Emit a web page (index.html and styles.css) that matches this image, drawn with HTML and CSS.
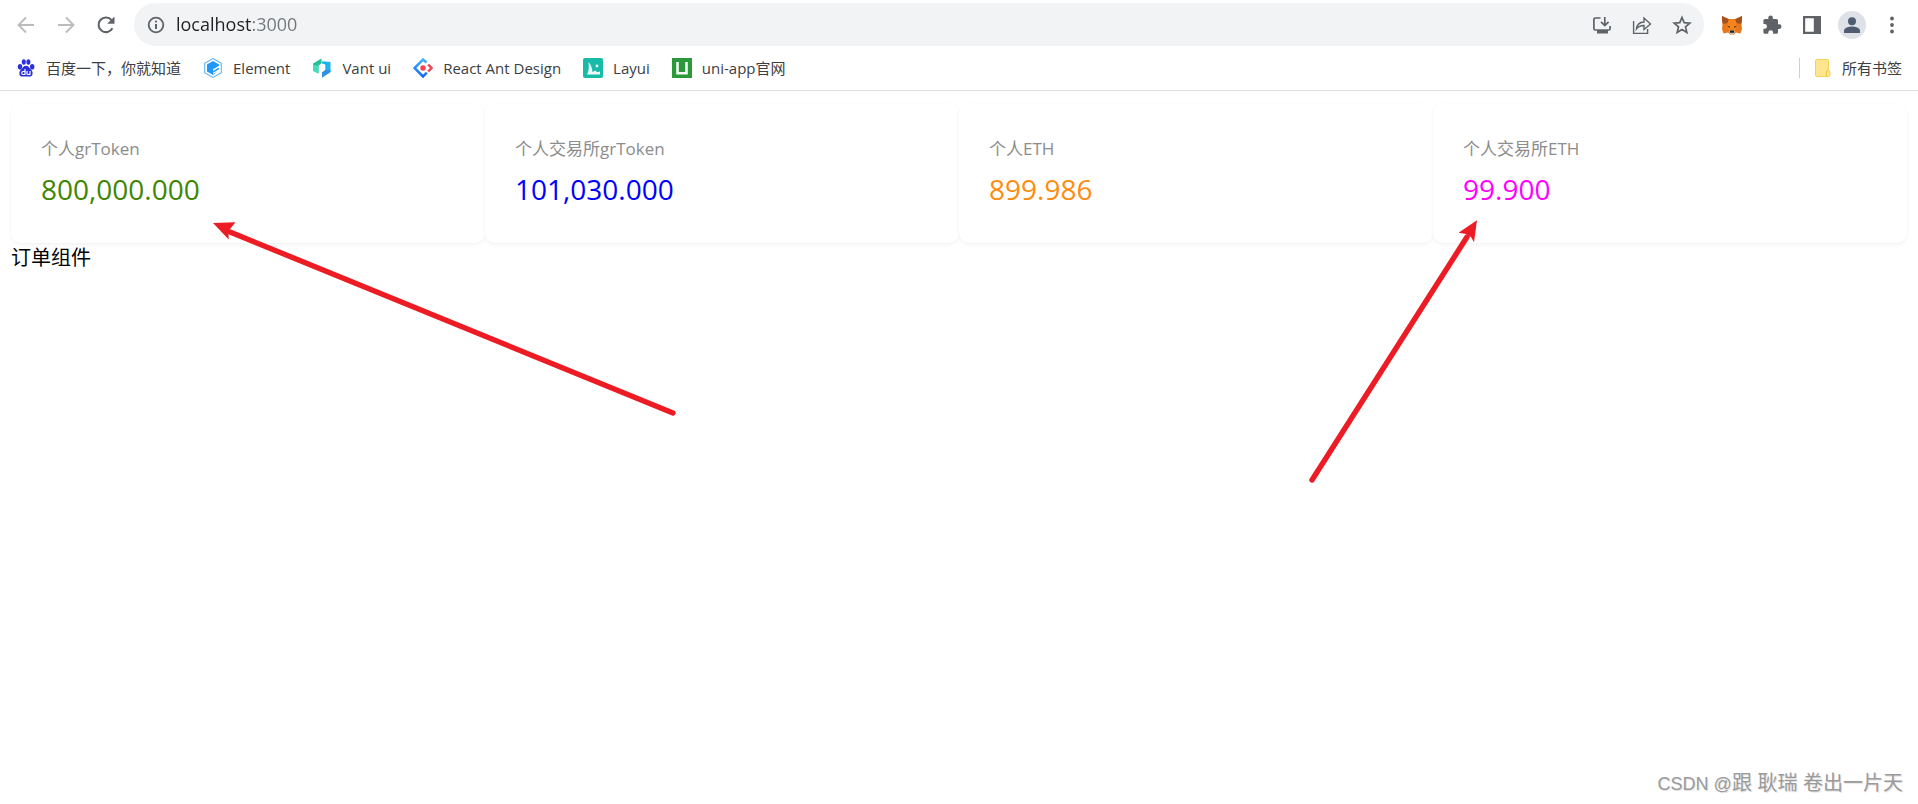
FILE: index.html
```html
<!DOCTYPE html>
<html lang="zh-CN">
<head>
<meta charset="utf-8">
<title>localhost:3000</title>
<link rel="stylesheet" href="styles.css">
</head>
<body>
<header class="browser">
  <nav class="toolbar" aria-label="浏览器">
    <div class="buttons">
      <button class="tool tool-disabled" aria-label="后退"><svg width="18" height="18" viewBox="0 0 18 18"><path d="M17 9H1.5M9 1.5 1.5 9 9 16.5" fill="none" stroke="currentColor" stroke-width="1.9"/></svg></button>
      <button class="tool tool-disabled" aria-label="前进"><svg width="18" height="18" viewBox="0 0 18 18"><path d="M1 9h15.500M9 1.500 16.500 9 9 16.500" fill="none" stroke="currentColor" stroke-width="1.9"/></svg></button>
      <button class="tool" aria-label="重新加载"><svg width="20" height="20" viewBox="0 0 20 20"><path d="M16.400 13.200A7.300 7.300 0 1 1 15.600 5.200" fill="none" stroke="currentColor" stroke-width="2.100"/><path d="M18.500 1.500v7.300h-7.300z" fill="currentColor"/></svg></button>
    </div>
    <div class="address">
      <button class="info" aria-label="网站信息"><svg width="18" height="18" viewBox="0 0 18 18"><circle cx="9" cy="9" r="7.300" fill="none" stroke="currentColor" stroke-width="1.800"/><path d="M9 8v5" stroke="currentColor" stroke-width="2"/><circle cx="9" cy="5.600" r="1.100" fill="currentColor"/></svg></button>
      <input class="url" type="text" value="localhost:3000" aria-label="地址">
      <button class="tool" aria-label="安装"><svg width="20" height="20" viewBox="0 0 20 20"><path d="M8.500 3H3.200Q1.900 3 1.900 4.300v9.400Q1.900 15 3.200 15h13.600q1.300 0 1.300-1.300V11M12.800 2v8.200M9 6.800l3.800 3.800 3.800-3.800" fill="none" stroke="currentColor" stroke-width="1.700"/><path d="M5 15h11v3.500H5z" fill="currentColor"/></svg></button>
      <button class="tool" aria-label="分享"><svg width="20" height="20" viewBox="0 0 20 20"><path d="M1.600 6v12.400h14V14M4.500 13.800C5 9.500 7.500 7.200 12 7V3l6.500 6-6.500 5.500v-4C8.500 10.400 6.300 11.500 4.500 13.800Z" fill="none" stroke="currentColor" stroke-width="1.400"/></svg></button>
      <button class="tool" aria-label="收藏"><svg width="20" height="20" viewBox="0 0 20 20"><path d="m10 2.500 2.200 5.200 5.600.5-4.300 3.700 1.300 5.500-4.800-2.900-4.800 2.900 1.300-5.500-4.300-3.700 5.600-.5z" fill="none" stroke="currentColor" stroke-width="1.700"/></svg></button>
    </div>
    <div class="buttons">
      <button class="tool" aria-label="MetaMask"><svg width="22" height="20" viewBox="0 0 22 20"><path d="M1 1l7 3h6l7-3-.5 8 .5 5-1.500 4.500-4.500-1-2 2H9l-2-2-4.500 1L1 14l.5-5z" fill="#e8761b"/><path d="M1 1l7 3.500L6.500 8 2 9 1 6zM21 1l-7 3.500L15.500 8l4.500 1 1-3z" fill="#a4501f"/><path d="M8 4.500h6l2 6-2 5H8l-2-5z" fill="#f6851b"/><path d="M6 10.500l3 1-.5 1.500zM16 10.500l-3 1 .5 1.500z" fill="#4a2d1a"/><path d="M7.500 17l1.500-1.500h4l1.500 1.500-1.500 2H9z" fill="#d0c0b2"/><path d="M9.200 15.500h3.600l.5 2.200H8.700z" fill="#20201f"/></svg></button>
      <button class="tool" aria-label="扩展程序"><svg width="20" height="20" viewBox="0 0 20 20"><path d="M17.200 9.300H16V5.600Q16 4 14.400 4h-3.500V2.800a2.300 2.300 0 0 0-4.600 0V4H3Q1.400 4 1.400 5.600V9h1.200a2.400 2.400 0 0 1 0 4.800H1.400v3.400q0 1.600 1.600 1.600h3.300v-1.200a2.400 2.400 0 0 1 4.800 0v1.200h3.300q1.600 0 1.600-1.600v-3.300h1.200a2.300 2.300 0 0 0 0-4.600z" fill="currentColor"/></svg></button>
      <button class="tool" aria-label="侧边栏"><svg width="20" height="20" viewBox="0 0 20 20"><path d="M1 1h18v18H1zM3.200 3.200v13.600h8.600V3.200z" fill="currentColor" fill-rule="evenodd"/></svg></button>
      <button class="tool" aria-label="用户"><svg width="28" height="28" viewBox="0 0 28 28"><circle cx="14" cy="14" r="14" fill="#dee1e8"/><circle cx="14" cy="10.200" r="4" fill="#4f5b70"/><path d="M6 22v-2.200c0-3 5-4.300 8-4.300s8 1.300 8 4.300V22z" fill="#4f5b70"/></svg></button>
      <button class="tool" aria-label="菜单"><svg width="4" height="18" viewBox="0 0 4 18"><g fill="currentColor"><circle cx="2" cy="2.500" r="1.900"/><circle cx="2" cy="9" r="1.900"/><circle cx="2" cy="15.500" r="1.900"/></g></svg></button>
    </div>
  </nav>
  <nav class="bookmarks" aria-label="书签">
    <a class="bookmark" href="#"><svg width="20" height="20" viewBox="0 0 20 20"><g fill="#2a2fe0"><ellipse cx="4" cy="8.800" rx="2.200" ry="2.800"/><ellipse cx="7.800" cy="4" rx="2" ry="2.800"/><ellipse cx="12.400" cy="4" rx="2" ry="2.800"/><ellipse cx="16.200" cy="8.800" rx="2.200" ry="2.800"/><path d="M10 7.800c2.300 0 3.500 2.200 4.700 3.500 3.400 3.400 1.800 7.300-1 7.300H6.300c-2.800 0-4.400-3.900-1-7.300C6.500 10 7.700 7.800 10 7.800z"/></g><path d="M9 11v5.500H7.200q-1.500 0-1.500-1.500t1.500-1.500H9M11 13v2.500q0 1 1 1h2V13" fill="none" stroke="#fff" stroke-width="1.200"/></svg><span>百度一下，你就知道</span></a>
    <a class="bookmark" href="#"><svg width="20" height="20" viewBox="0 0 20 20"><path d="M10 .6 18.300 5.300v9.400L10 19.400 1.700 14.700V5.300z" fill="none" stroke="#5eb3f8" stroke-width="1.100"/><path d="M10 3l6 3.500v1.300l-6 3.500v1.600l6-3.500v1.800l-6 3.500v1.200l4.500-2.500L10 17l-6-3.500v-7z" fill="#1e98fa"/></svg><span>Element</span></a>
    <a class="bookmark" href="#"><svg width="20" height="20" viewBox="0 0 20 20"><path d="M9.500.5v5L6.500 7.500v7.900L1 12.800V5.500z" fill="#22bf98"/><path d="M1 6.500 6.500 8v7.400L1 12.800z" fill="#45dcbd"/><path d="M10 3.200 18.500 4v10L10 19.500v-5l3.300-2.300V6.500L10 5.500z" fill="#1db3ef"/><path d="M18.500 12v2L10 19.500v-5l3.300-2.500z" fill="#3290e0"/></svg><span>Vant ui</span></a>
    <a class="bookmark" href="#"><svg width="20" height="20" viewBox="0 0 20 20"><defs><linearGradient id="antBlue" x1="0" y1="0" x2="0" y2="1"><stop offset="0" stop-color="#40b4ff"/><stop offset="1" stop-color="#1268f5"/></linearGradient></defs><path d="M13.500 4.500 10 1.500 1.500 10l8.500 8.500 3.800-3.800" fill="none" stroke="url(#antBlue)" stroke-width="2.500"/><path d="m15.200 6.500 3.300 3.500-3.300 3.500" fill="none" stroke="#f5424f" stroke-width="2.500"/><circle cx="10" cy="10" r="2.700" fill="#f5424f"/></svg><span>React Ant Design</span></a>
    <a class="bookmark" href="#"><svg width="20" height="20" viewBox="0 0 20 20"><rect width="20" height="20" rx="2" fill="#18baa8"/><path d="M4 16.500C6 13 6 8 5.500 4c2.500 2.500 3.500 6 4 10l3-1.500 1.500 1.800 3-.8v3z" fill="#effaf8"/><circle cx="14" cy="8" r="1.400" fill="#effaf8"/></svg><span>Layui</span></a>
    <a class="bookmark" href="#"><svg width="20" height="20" viewBox="0 0 20 20"><path fill="#2b9939" d="M0 0h20v20H0z"/><path d="M5.500 4v11.200h9V4" fill="none" stroke="#f5faf5" stroke-width="2.600"/></svg><span>uni-app官网</span></a>
    <a class="bookmark bookmark-all" href="#"><svg width="20" height="20" viewBox="0 0 20 20"><path d="M4.500 1.500h11q1 0 1 1v9.500q1.500.5 1.500 2v3q0 1.500-1.500 1.500h-12q-1 0-1-1v-15q0-1 1-1z" fill="#ffe58f" stroke="#f7d154"/><path d="M14.500 18v-4q0-2 2-2" fill="none" stroke="#f0c63c"/></svg><span>所有书签</span></a>
  </nav>
</header>
<main class="page">
  <section class="cards">
    <article class="card"><div class="card-title">个人grToken</div><div class="card-value value-green">800,000.000</div></article>
    <article class="card"><div class="card-title">个人交易所grToken</div><div class="card-value value-blue">101,030.000</div></article>
    <article class="card"><div class="card-title">个人ETH</div><div class="card-value value-orange">899.986</div></article>
    <article class="card"><div class="card-title">个人交易所ETH</div><div class="card-value value-magenta">99.900</div></article>
  </section>
  <div class="orders">订单组件</div>
</main>
<svg class="arrow arrow-token" width="466" height="200" viewBox="0 0 466 200"><path d="M18 10 461 191" stroke="#ed1c24" stroke-width="5.400" stroke-linecap="round"/><path d="M1 1 23.500.3 18 7l-1.500 4.500.2 6z" fill="#ed1c24"/></svg>
<svg class="arrow arrow-eth" width="172" height="270" viewBox="0 0 172 270"><path d="M159 17 4 260" stroke="#ed1c24" stroke-width="5.400" stroke-linecap="round"/><path d="M169 .2 150.500 12.800 158 14l5 3 3 5.200z" fill="#ed1c24"/></svg>
<div class="watermark"><span class="watermark-latin">CSDN @</span>跟 耿瑞 卷出一片天</div>
</body>
</html>
```
FILE: styles.css
```css
* {
  box-sizing: border-box;
}

body {
  position: relative;
  min-height: 100vh;
  margin: 0;
  background: #fff;
  color: #000;
  font-family: "Open Sans", "Noto Sans CJK SC", sans-serif;
  font-size: 20px;
}

button {
  padding: 0;
  border: 0;
  background: none;
  color: inherit;
}

svg {
  display: block;
  flex: none;
}

.browser {
  border-bottom: 1px solid #dadce0;
  color: #5f6368;
}

.toolbar {
  display: flex;
  align-items: center;
  gap: 8px;
  padding: 3px 6px 0;
}

.buttons {
  display: flex;
  height: 42px;
}

.tool {
  display: flex;
  flex: none;
  align-items: center;
  justify-content: center;
  width: 40px;
}

.tool-disabled {
  color: #babcbe;
}

.address {
  display: flex;
  flex: 1;
  height: 43px;
  padding: 0 2px 0 8px;
  border-radius: 22px;
  background: #f1f3f4;
}

.info {
  display: flex;
  align-items: center;
  justify-content: center;
  width: 28px;
}

.url {
  flex: 1;
  min-width: 0;
  margin-left: 6px;
  padding: 0 0 2px;
  border: 0;
  outline: 0;
  background: linear-gradient(90deg, #202124 76px, #73777b 76px);
  -webkit-background-clip: text;
  background-clip: text;
  color: transparent;
  font: 18px "Open Sans", sans-serif;
}

.bookmarks {
  display: flex;
  align-items: center;
  gap: 22px;
  height: 44px;
  padding: 0 16px;
}

.bookmark {
  display: flex;
  align-items: center;
  gap: 10px;
  color: #3c4043;
  font-size: 15px;
  line-height: 20px;
  text-decoration: none;
  white-space: nowrap;
}

.bookmark-all {
  margin-left: auto;
  padding-left: 12px;
  border-left: 1px solid #cacdd1;
}

.page {
  padding: 13px 11px;
}

.cards {
  display: grid;
  grid-template-columns: repeat(4, 1fr);
}

.card {
  padding: 30px 30px 32px;
  border-radius: 10px;
  background: #fff;
  box-shadow: 0 1px 3px rgba(0, 0, 0, 0.03), 0 1px 8px -1px rgba(0, 0, 0, 0.02), 0 3px 5px rgba(0, 0, 0, 0.02);
}

.card-title {
  margin-bottom: 3px;
  color: #8c8c8c;
  font-size: 17px;
  line-height: 30px;
}

.card-value {
  font-size: 28px;
  line-height: 44px;
}

.value-green {
  color: #3f8600;
}

.value-blue {
  color: #00f;
}

.value-orange {
  color: #ff8c0f;
}

.value-magenta {
  color: #f0f;
}

.orders {
  line-height: 30px;
}

.arrow {
  position: absolute;
  pointer-events: none;
}

.arrow-token {
  top: 222px;
  left: 212px;
}

.arrow-eth {
  top: 220px;
  left: 1308px;
}

.watermark {
  position: absolute;
  right: 15px;
  bottom: 5px;
  color: #9a9a9a;
  font-family: "Liberation Sans", "Noto Sans CJK SC", sans-serif;
  line-height: 30px;
  text-shadow: 1px 1px 0 #e4e4e4;
}

.watermark-latin {
  font-size: 18px;
}
```
